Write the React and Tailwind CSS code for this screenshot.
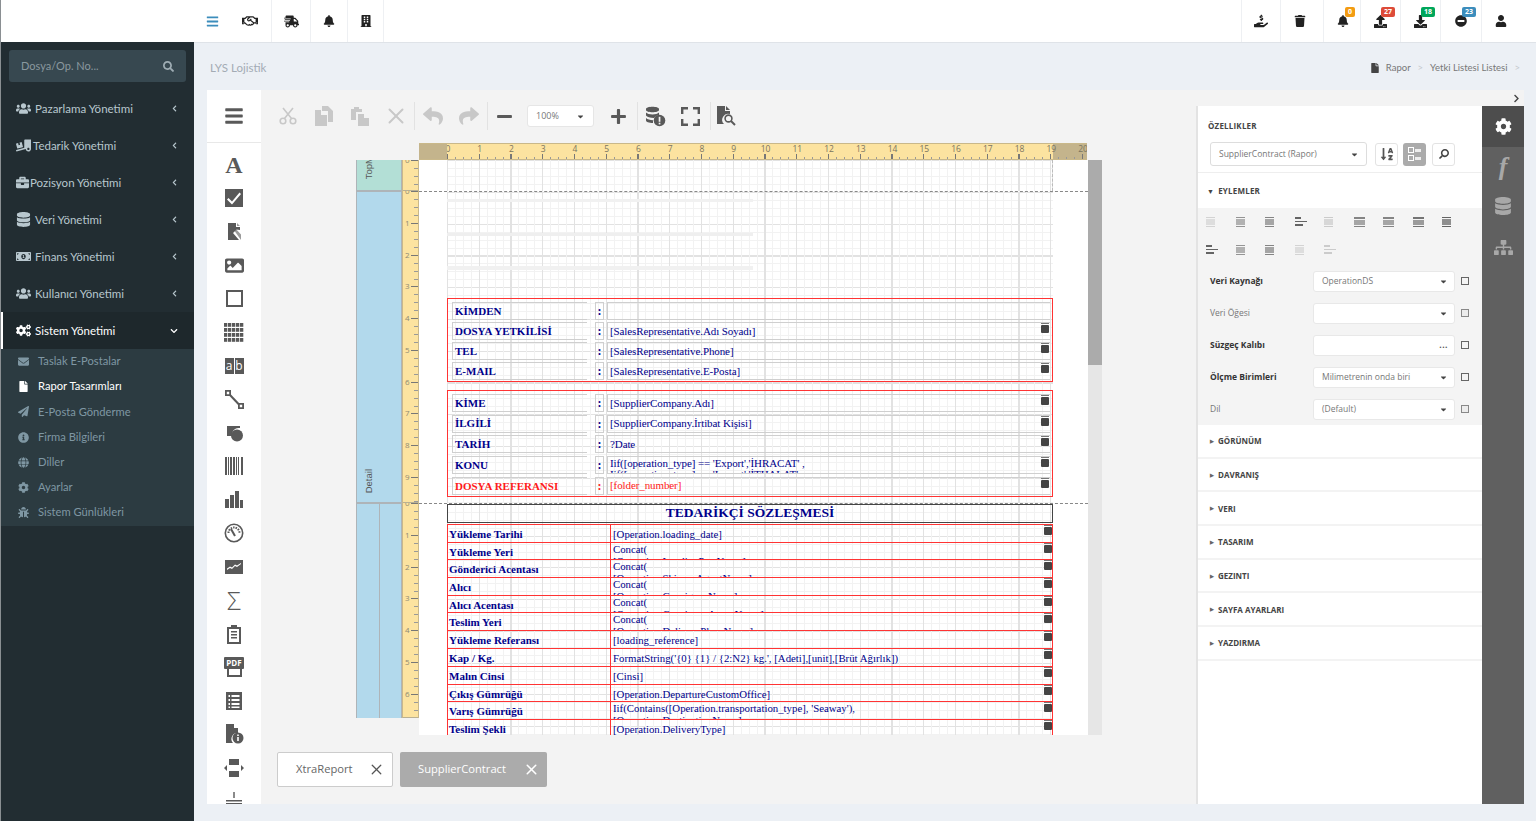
import { X } from 'lucide-react';
import {
  FaBars, FaRegHandshake, FaShippingFast, FaBell, FaBuilding, FaHandHoldingUsd, FaTrash, FaUpload, FaDownload,
  FaMinusCircle, FaUser, FaSearch, FaUsers, FaTruckLoading, FaBriefcase, FaDatabase, FaMoneyBillAlt, FaCogs,
  FaEnvelope, FaFile, FaPaperPlane, FaInfoCircle, FaGlobe, FaCog, FaBug, FaChevronLeft, FaChevronDown, FaChevronRight,
  FaReply, FaShare, FaMinus, FaPlus, FaImage, FaCaretDown, FaSitemap, FaSortAlphaDown,
} from 'react-icons/fa';

const SANS = "font-['Open_Sans','Noto_Sans',sans-serif]";
const LATO = "font-['Lato','Noto_Sans',sans-serif]";
const SERIF = "font-['Liberation_Serif',serif]";

const menu = [
  { label: 'Pazarlama Yönetimi', Icon: FaUsers, size: 15, gap: 'gap-[4px]' },
  { label: 'Tedarik Yönetimi', Icon: FaTruckLoading, size: 15, gap: 'gap-[2px]' },
  { label: 'Pozisyon Yönetimi', Icon: FaBriefcase, size: 13, gap: 'gap-[1px]' },
  { label: 'Veri Yönetimi', Icon: FaDatabase, size: 15, gap: 'gap-[4px]' },
  { label: 'Finans Yönetimi', Icon: FaMoneyBillAlt, size: 15, gap: 'gap-[4px]' },
  { label: 'Kullanıcı Yönetimi', Icon: FaUsers, size: 15, gap: 'gap-[4px]' },
];

const subMenu = [
  { label: 'Taslak E-Postalar', Icon: FaEnvelope },
  { label: 'Rapor Tasarımları', Icon: FaFile, active: true },
  { label: 'E-Posta Gönderme', Icon: FaPaperPlane },
  { label: 'Firma Bilgileri', Icon: FaInfoCircle },
  { label: 'Diller', Icon: FaGlobe },
  { label: 'Ayarlar', Icon: FaCog },
  { label: 'Sistem Günlükleri', Icon: FaBug },
];

function HeaderCell({ width, Icon, size = 13, color = 'text-[#222]', badge, badgeColor, last }) {
  return (
    <div className={`relative flex h-full items-center justify-center ${last ? '' : 'border-r border-[#eef0f3]'} ${width}`}>
      <Icon size={size} className={color} />
      {badge && (
        <span className={`absolute top-[7px] right-[5px] rounded-[2px] px-[3px] text-[7px] leading-[10px] font-bold text-white ${badgeColor}`}>
          {badge}
        </span>
      )}
    </div>
  );
}

function TopBar() {
  return (
    <header className="flex h-[43px] shrink-0 items-stretch justify-between border-b border-[#dfe3e8] bg-white">
      <div className="flex h-[42px]">
        <HeaderCell width="w-[36px]" Icon={FaBars} size={13} color="text-[#3c8dbc]" last />
        <HeaderCell width="w-[42px] pr-[2px]" Icon={FaRegHandshake} size={16} />
        <HeaderCell width="w-[39px]" Icon={FaShippingFast} size={15} />
        <HeaderCell width="w-[37px]" Icon={FaBell} size={12} />
        <HeaderCell width="w-[36px]" Icon={FaBuilding} size={12} />
      </div>
      <div className="flex h-[42px]">
        <div className="w-px bg-[#eef0f3]" />
        <HeaderCell width="w-[39px]" Icon={FaHandHoldingUsd} size={14} />
        <HeaderCell width="w-[43px] pr-[4px]" Icon={FaTrash} size={12} />
        <HeaderCell width="w-[37px] pl-[1px]" Icon={FaBell} size={12} badge="0" badgeColor="bg-[#f39c12]" />
        <HeaderCell width="w-[40px]" Icon={FaUpload} size={13} badge="27" badgeColor="bg-[#dd4b39]" />
        <HeaderCell width="w-[40px]" Icon={FaDownload} size={13} badge="18" badgeColor="bg-[#00a65a]" />
        <HeaderCell width="w-[41px]" Icon={FaMinusCircle} size={12} badge="23" badgeColor="bg-[#3c8dbc]" />
        <HeaderCell width="w-[54px] pr-[16px]" Icon={FaUser} size={12} last />
      </div>
    </header>
  );
}

function Sidebar() {
  return (
    <aside className={`flex w-[194px] shrink-0 flex-col border-l border-[#8a8f92] ${LATO}`}>
      <div className="h-[42px] shrink-0 bg-white" />
      <div className="flex flex-1 flex-col bg-[#222d32]">
        <div className="mx-[8px] mt-[8px] mb-[8px] flex h-[32px] items-center justify-between rounded-[3px] bg-[#374850] pr-[12px] pl-[12px]">
          <span className="text-[11px] text-[#8a989f]">Dosya/Op. No...</span>
          <FaSearch size={11} className="text-[#9fadb4]" />
        </div>
        {menu.map(({ label, Icon, size, gap }) => (
          <div key={label} className="flex h-[37px] items-center justify-between pr-[16px] pl-[15px] text-[#b8c7ce]">
            <div className={`flex items-center ${gap}`}>
              <Icon size={size} />
              <span className="text-[11.500px]">{label}</span>
            </div>
            <FaChevronLeft size={7} />
          </div>
        ))}
        <div className="flex h-[37px] items-center justify-between border-l-[2px] border-white bg-[#1e282c] pr-[16px] pl-[13px] text-white">
          <div className="flex items-center gap-[4px]">
            <FaCogs size={15} />
            <span className="text-[11.500px]">Sistem Yönetimi</span>
          </div>
          <FaChevronDown size={8} />
        </div>
        <div className="flex h-[177px] flex-col bg-[#2c3b41]">
          {subMenu.map(({ label, Icon, active }) => (
            <div key={label} className={`flex h-[25.2px] items-center gap-[9px] pl-[17px] ${active ? 'text-white' : 'text-[#7f97a3]'}`}>
              <span className="flex w-[11px] justify-center"><Icon size={11} /></span>
              <span className="text-[11.200px]">{label}</span>
            </div>
          ))}
        </div>
      </div>
    </aside>
  );
}

/* toolbox drawings, DevExpress glyphs have no package equivalent */
function Glyph({ children, size = 20, vb = '0 0 20 20' }) {
  return <svg width={size} height={size} viewBox={vb} fill="#595959">{children}</svg>;
}

const toolbox = [
  <span key="a" className={`${SERIF} text-[24px] leading-none font-bold text-[#595959]`}>A</span>,
  <Glyph key="c" size={18} vb="0 0 18 18"><path fillRule="evenodd" d="M0 0h18v18H0zm3.500 9L2 10.500 7 15.500 16 5 14.500 3.500 7 12.500z" /></Glyph>,
  <Glyph key="f"><path d="M4 1h8v4h4v3l-3.500-.5L9 11l6 7H4z" /><path d="M13 1l3 3h-3zM9.500 7.500l1.500-1.500 6 6.500v5.500z" fillOpacity=".6" /></Glyph>,
  <FaImage key="i" size={19} className="text-[#595959]" />,
  <div key="r" className="h-[17px] w-[17px] border-2 border-[#595959]" />,
  <Glyph key="t">
    {[1, 6, 11, 16].flatMap((y) => [0, 4, 8, 12, 16].map((x) => <rect key={`${x}-${y}`} x={x} y={y} width="3.300" height="3.800" />))}
  </Glyph>,
  <div key="ab" className="flex h-[16px] w-[19px] gap-px text-[12px] leading-[16px] text-white">
    <span className="flex-1 bg-[#595959] text-center">a</span>
    <span className="flex-1 bg-[#595959] text-center">b</span>
  </div>,
  <Glyph key="l"><path d="M1 1h6v6H1zm1.800 1.800v2.400h2.400V2.800zM14 14h6v6h-6zm1.800 1.800v2.400h2.400v-2.400z" fillRule="evenodd" /><path d="M6.500 5l9 9.500-1.500 1.500-9-9.500z" /></Glyph>,
  <Glyph key="s"><path d="M3 3h13v2a7 7 0 0 0-8 5 7 7 0 0 0 .2 3H3z" /><circle cx="13" cy="12.500" r="6" /></Glyph>,
  <Glyph key="b">
    {[[1, 2], [4, 1], [6, 2], [9, 2], [12, 1], [14, 1], [17, 2]].map(([x, w]) => <rect key={x} x={x} y="1" width={w} height="18" />)}
  </Glyph>,
  <Glyph key="ch"><rect x="1" y="9" width="4" height="9" /><rect x="6" y="5" width="4" height="13" /><rect x="11" y="1" width="4" height="17" /><rect x="16" y="10" width="3" height="8" /></Glyph>,
  <svg key="g" width="20" height="20" viewBox="0 0 20 20" fill="none" stroke="#595959"><circle cx="10" cy="10" r="8.700" strokeWidth="1.600" /><path d="M4.500 10a5.500 5.500 0 0 1 11 0" strokeWidth="2" strokeDasharray="1.500 1" /><path d="M7 6l4 7" strokeWidth="2" /></svg>,
  <Glyph key="sp"><path fillRule="evenodd" d="M1 3h18v14H1zm2 10l3-2 2 1 3-3 2 1 4-3v-1l-4 2.500-2-1-3 3-2-1-3 2z" /></Glyph>,
  <span key="sg" className="text-[25px] leading-none font-light text-[#595959]">Σ</span>,
  <Glyph key="cl"><path fillRule="evenodd" d="M3 3h4V1h6v2h4v17H3zm2 2v13h10V5zm2 2h6v1.500H7zm0 3h6v1.500H7zm0 3h6v1.500H7z" /></Glyph>,
  <div key="p" className="flex h-[21px] w-[20px] flex-col items-center">
    <span className="flex h-[12px] w-full items-center justify-center rounded-[1px] bg-[#595959] text-[8px] font-bold text-white">PDF</span>
    <span className="h-[8px] w-[15px] border-x-2 border-b-2 border-[#595959]" />
  </div>,
  <Glyph key="li"><path fillRule="evenodd" d="M2 1h16v18H2zm2.500 3v2H6V4zm3 0v2h8V4zm-3 4v2H6V8zm3 0v2h8V8zm-3 4v2H6v-2zm3 0v2h8v-2zm-3 3.500V17H6v-1.500zm3 0V17h8v-1.500z" /></Glyph>,
  <Glyph key="fi"><path d="M2 0h8v4h4v5a6 6 0 0 0-5 10H2z" /><circle cx="14" cy="14" r="5.500" /><rect x="13.200" y="13" width="1.600" height="4" fill="#fff" /><rect x="13.200" y="10.500" width="1.600" height="1.500" fill="#fff" /></Glyph>,
  <Glyph key="pb"><path d="M5 1h10v6H5zM5 13h10v6H5zM0 10l3-3v6zM20 10l-3-3v6z" /></Glyph>,
  <Glyph key="bt"><rect x="9.300" y="1" width="1.400" height="6" /><rect x="2" y="9" width="16" height="1.500" /><rect x="2" y="12" width="16" height="1.500" /></Glyph>,
];

function Toolbox() {
  return (
    <div className="flex w-[54px] shrink-0 flex-col overflow-hidden bg-white">
      <div className="flex h-[53px] shrink-0 items-center justify-center border-b border-[#e8e8e8]">
        <FaBars size={20} className="text-[#595959]" />
      </div>
      <div className="pt-[5px]">
        {toolbox.map((item, i) => (
          <div key={i} className="flex h-[33.5px] items-center justify-center">{item}</div>
        ))}
      </div>
    </div>
  );
}

function Sep() {
  return <div className="h-[28px] w-px shrink-0 bg-[#e2e2e2]" />;
}

function ToolBtn({ width = 'w-[36px]', children }) {
  return <div className={`flex shrink-0 items-center justify-center ${width}`}>{children}</div>;
}

function Toolbar() {
  const off = 'text-[#c8c8c8]';
  const on = 'text-[#595959]';
  return (
    <div className="flex h-[53px] items-center pb-[1px] pl-[9px]">
      <ToolBtn>
        <svg width="18" height="18" viewBox="0 0 18 18" fill="none" stroke="#c8c8c8" strokeWidth="1.600"><circle cx="4" cy="14" r="2.800" /><circle cx="14" cy="14" r="2.800" /><path d="M5.500 11.500L14 1M12.500 11.500L4 1" /></svg>
      </ToolBtn>
      <ToolBtn>
        <svg width="20" height="21" viewBox="0 0 20 21" fill="#c8c8c8"><path d="M8 0h6l5 5v11h-5V5H8z" /><path d="M1 4h6v5h6v11H1z" /></svg>
      </ToolBtn>
      <ToolBtn>
        <svg width="20" height="20" viewBox="0 0 20 20" fill="#c8c8c8"><path d="M1 3h3V1h5v2h3v3H6v8H1z" /><path d="M8 8h6v4h5v8H8z" /></svg>
      </ToolBtn>
      <ToolBtn><X size={26} strokeWidth={1.800} className={off} /></ToolBtn>
      <Sep />
      <ToolBtn><FaReply size={20} className={off} /></ToolBtn>
      <ToolBtn><FaShare size={20} className={off} /></ToolBtn>
      <Sep />
      <ToolBtn width="w-[33px]"><FaMinus size={17} className={on} /></ToolBtn>
      <div className={`ml-[6px] flex h-[22px] w-[67px] shrink-0 items-center justify-between rounded-[3px] border border-[#e6e6e6] bg-white pr-[8px] pl-[8px] text-[9px] text-[#777] ${SANS}`}>
        100%
        <FaCaretDown size={9} className="text-[#444]" />
      </div>
      <ToolBtn width="w-[43px] pl-[5px]"><FaPlus size={17} className={on} /></ToolBtn>
      <Sep />
      <ToolBtn width="w-[34px]">
        <svg width="21" height="21" viewBox="0 0 21 21" fill="#595959"><path d="M1 3c0-3 13-3 13 0v1c0 3-13 3-13 0zM1 6.500c2 2.500 11 2.500 13 0V9a7 7 0 0 0-5 3c-4 0-7-1-8-2.500zM1 12c1.500 1.500 4 2 7 2.200V17c-4 0-7-1-7-2.500z" /><circle cx="14.500" cy="14.500" r="5.800" /><rect x="13.700" y="10.800" width="1.700" height="5" fill="#f3f3f3" /><rect x="13.700" y="16.700" width="1.700" height="1.700" fill="#f3f3f3" /></svg>
      </ToolBtn>
      <ToolBtn width="w-[38px] pr-[1px]">
        <svg width="19" height="19" viewBox="0 0 19 19" fill="none" stroke="#595959" strokeWidth="2.400"><path d="M1.200 7V1.200H7M12 1.200h5.800V7M17.800 12v5.800H12M7 17.800H1.200V12" /></svg>
      </ToolBtn>
      <Sep />
      <ToolBtn width="w-[32px] pr-[3px]">
        <svg width="20" height="20" viewBox="0 0 20 20"><path d="M1 0h8v5h5v3a6 6 0 0 0-6 10H1z" fill="#595959" /><path d="M10 0l4 4h-4z" fill="#595959" /><circle cx="12.500" cy="12.500" r="3.400" fill="none" stroke="#595959" strokeWidth="1.600" /><path d="M15 15l4 4" stroke="#595959" strokeWidth="2" /></svg>
      </ToolBtn>
    </div>
  );
}

function Bin() {
  return (
    <svg width="8" height="10" viewBox="0 0 8 10" className="shrink-0" fill="#444">
      <rect x="0" y="0" width="8" height="1" fill="#777" />
      <rect x="0" y="2" width="8" height="8" rx="1" />
    </svg>
  );
}

function FormRow({ label, value, red }) {
  const color = red ? 'text-[#ff1a1a]' : 'text-[#00008b]';
  return (
    <div className={`flex h-[18px] items-stretch ${SERIF}`}>
      <div className={`flex w-[135px] items-center border-y border-l border-[#cfcfcf] pl-[2px] text-[11px] font-bold ${color}`}>{label}</div>
      <div className={`ml-[8px] flex w-[9px] items-center justify-center border border-[#cfcfcf] text-[12px] font-bold ${color}`}>:</div>
      <div className={`ml-[3px] flex w-[443px] items-start justify-between overflow-hidden border-y border-l border-[#cfcfcf] pr-[1px] pl-[2px] text-[11px] tracking-[-0.1px] ${color}`}>
        <span className={`${value.includes('\n') ? 'pt-[1px] leading-[11px]' : 'self-center leading-none'} whitespace-pre`}>{value}</span>
        {value !== '' && <Bin />}
      </div>
    </div>
  );
}

const tableRows = [
  { h: 'h-[18px]', label: 'Yükleme Tarihi', value: '[Operation.loading_date]' },
  { h: 'h-[17px]', label: 'Yükleme Yeri', value: 'Concat(\n[Operation.LoadingPortName]', clip: true },
  { h: 'h-[18px]', label: 'Gönderici Acentası', value: 'Concat(\n[Operation.ShipperAgentName]', clip: true },
  { h: 'h-[18px]', label: 'Alıcı', value: 'Concat(\n[Operation.ConsigneeName]', clip: true },
  { h: 'h-[17px]', label: 'Alıcı Acentası', value: 'Concat(\n[Operation.ConsigneeAgentName]', clip: true },
  { h: 'h-[18px]', label: 'Teslim Yeri', value: 'Concat(\n[Operation.DeliveryPlaceName]', clip: true },
  { h: 'h-[18px]', label: 'Yükleme Referansı', value: '[loading_reference]' },
  { h: 'h-[18px]', label: 'Kap / Kg.', value: "FormatString('{0} {1} / {2:N2} kg.', [Adeti],[unit],[Brüt Ağırlık])" },
  { h: 'h-[18px]', label: 'Malın Cinsi', value: '[Cinsi]' },
  { h: 'h-[17px]', label: 'Çıkış Gümrüğü', value: '[Operation.DepartureCustomOffice]' },
  { h: 'h-[18px]', label: 'Varış Gümrüğü', value: "Iif(Contains([Operation.transportation_type], 'Seaway'),\n[Operation.DestinationName]", clip: true },
  { h: 'h-[18px]', label: 'Teslim Şekli', value: '[Operation.DeliveryType]' },
];

function ReportTable() {
  return (
    <div className={`mt-[1px] border-t border-[#ff3333] ${SERIF}`}>
      {tableRows.map(({ h, label, value, clip }) => (
        <div key={label} className={`flex border-b border-[#ff3333] ${h}`}>
          <div className="flex w-[164px] shrink-0 items-center border-x border-[#ff3333] pt-[2px] pl-[1px] text-[11px] font-bold text-[#00008b]">{label}</div>
          <div className="flex flex-1 items-start justify-between overflow-hidden border-r border-[#ff3333] pl-[2px] text-[10.800px] text-[#00008b]">
            <span className={`leading-[12px] whitespace-pre ${clip ? '' : 'pt-[3px]'}`}>{value}</span>
            <Bin />
          </div>
        </div>
      ))}
    </div>
  );
}

const sectionOne = [
  { label: 'KİMDEN', value: '' },
  { label: 'DOSYA YETKİLİSİ', value: '[SalesRepresentative.Adı Soyadı]' },
  { label: 'TEL', value: '[SalesRepresentative.Phone]' },
  { label: 'E-MAIL', value: '[SalesRepresentative.E-Posta]' },
];

const sectionTwo = [
  { label: 'KİME', value: '[SupplierCompany.Adı]' },
  { label: 'İLGİLİ', value: '[SupplierCompany.İrtibat Kişisi]' },
  { label: 'TARİH', value: '?Date' },
  { label: 'KONU', value: "Iif([operation_type] == 'Export','İHRACAT' ,\nIif([operation_type] == 'Import','İTHALAT'" },
  { label: 'DOSYA REFERANSI', value: '[folder_number]', red: true },
];

const paperGrid = "[background-image:repeating-linear-gradient(90deg,#e2e2e2_0,#e2e2e2_1px,transparent_1px,transparent_31.75px),repeating-linear-gradient(90deg,#f2f2f2_0,#f2f2f2_1px,transparent_1px,transparent_7.9375px),repeating-linear-gradient(180deg,#e2e2e2_0,#e2e2e2_1px,transparent_1px,transparent_31.75px),repeating-linear-gradient(180deg,#f2f2f2_0,#f2f2f2_1px,transparent_1px,transparent_7.9375px)]";

function VRuler({ height, count }) {
  return (
    <div className={`flex flex-col overflow-hidden border-b border-[#b9b093] ${height}`}>
      {Array.from({ length: count }, (_, i) => (
        <div key={i} className="flex h-[31.75px] shrink-0 items-start justify-between">
          <span className={`w-[9px] -translate-y-1/2 pl-[2px] text-[8px] leading-[10px] text-[#8f8a73] ${SANS}`}>{i}</span>
          <div className="h-full w-[8px] [background:repeating-linear-gradient(180deg,#777_0,#777_1px,transparent_1px,transparent_31.75px)_right_top/8px_100%_no-repeat,repeating-linear-gradient(180deg,#999_0,#999_1px,transparent_1px,transparent_7.9375px)_right_top/4px_100%_no-repeat]" />
        </div>
      ))}
    </div>
  );
}

function Surface() {
  return (
    <div className="mx-[95px] flex h-[592px] w-[746px] shrink-0 flex-col overflow-hidden">
      {/* top ruler */}
      <div className="flex h-[17px] shrink-0 pl-[63px]">
        <div className="flex w-[668px] border-y border-[#c9b88a] bg-[#fce3a0]">
          <div className="w-[28px] shrink-0 bg-[#c4b48c]" />
          <div className="relative flex flex-1 flex-col overflow-hidden">
            <div className="absolute top-0 right-0 bottom-0 w-[34px] bg-[#c4b48c]" />
            <div className={`relative flex h-[10px] text-[8.500px] leading-[10px] text-[#7a745f] ${SANS}`}>
              {Array.from({ length: 21 }, (_, i) => (
                <span key={i} className="w-[31.75px] shrink-0"><span className="inline-block -translate-x-1/2 pl-[2px]">{i}</span></span>
              ))}
            </div>
            <div className="relative h-[5px] [background:repeating-linear-gradient(90deg,#777_0,#777_1px,transparent_1px,transparent_31.75px)_left_bottom/100%_5px_no-repeat,repeating-linear-gradient(90deg,#999_0,#999_1px,transparent_1px,transparent_7.9375px)_left_bottom/100%_2px_no-repeat]" />
          </div>
        </div>
      </div>
      <div className="flex min-h-0 flex-1">
        {/* band labels */}
        <div className="flex h-[558px] w-[46px] shrink-0 flex-col border-x border-[#aeb4b8] font-['Liberation_Sans',sans-serif] text-[9.500px] text-[#555]">
          <div className="flex h-[32px] shrink-0 overflow-hidden border-b-2 border-[#aeb4b8] bg-[#b3dfd6] pl-[5px]">
            <span className="-mt-[4px] self-start [writing-mode:vertical-rl] rotate-180">TopM</span>
          </div>
          <div className="flex h-[312px] shrink-0 items-end border-b-2 border-[#aeb4b8] bg-[#b2d9ec] pb-[9px] pl-[5px]">
            <span className="[writing-mode:vertical-rl] rotate-180">Detail</span>
          </div>
          <div className="flex flex-1 bg-[#b2d9ec]">
            <div className="w-[23px] border-r border-[#aeb4b8]" />
          </div>
        </div>
        {/* side ruler */}
        <div className="flex h-[558px] w-[17px] shrink-0 flex-col border-x border-[#c9b88a] bg-[#fce3a0]">
          <VRuler height="h-[31px]" count={1} />
          <VRuler height="h-[312px]" count={10} />
          <VRuler height="h-[215px]" count={7} />
        </div>
        {/* report page */}
        <div className="flex h-[575px] w-[669px] shrink-0 flex-col bg-white">
          <div className="flex h-[32px] shrink-0 border-b border-dashed border-[#888] pl-[28px]">
            <div className={`h-full w-[606px] border-r border-dashed border-[#bbb] ${paperGrid}`} />
          </div>
          <div className="flex h-[312px] shrink-0 border-b border-dashed border-[#888] pl-[28px]">
            <div className={`w-[606px] ${paperGrid}`}>
              <div className="h-[106px] pt-[7px]">
                <div className="h-[3px] w-[306px] bg-[#f1f1f1]" />
                <div className="mt-[31px] h-[3px] w-[306px] bg-[#efefef]" />
                <div className="mt-[30px] h-[4px] w-[306px] bg-[#f1f1f1]" />
              </div>
              <div className="flex h-[84px] flex-col gap-[2px] border border-[#ff3333] pt-[3px] pl-[4px]">
                {sectionOne.map((r) => <FormRow key={r.label} {...r} />)}
              </div>
              <div className="mt-[8px] flex h-[107px] flex-col gap-[2.700px] border border-[#ff3333] pt-[3px] pl-[4px]">
                {sectionTwo.map((r) => <FormRow key={r.label} {...r} />)}
              </div>
            </div>
          </div>
          <div className="min-h-0 flex-1 overflow-hidden pl-[28px]">
            <div className={`h-full w-[606px] ${paperGrid}`}>
              <div className={`flex h-[19px] items-center justify-center border border-[#444] text-[13.500px] font-bold text-[#00008b] ${SERIF}`}>
                TEDARİKÇİ SÖZLEŞMESİ
              </div>
              <ReportTable />
            </div>
          </div>
        </div>
        {/* scrollbar */}
        <div className="h-[575px] w-[14px] shrink-0 bg-[#e6e6e6]">
          <div className="h-[205px] bg-[#ababab]" />
        </div>
      </div>
    </div>
  );
}

function DocTabs() {
  return (
    <div className={`mt-[17px] flex gap-[7px] pl-[16px] ${SANS} text-[11.200px]`}>
      <div className="flex h-[35px] w-[116px] items-center justify-between rounded-[2px] border border-[#cccccc] bg-white pr-[7px] pl-[18px] text-[#666]">
        XtraReport
        <X size={17} strokeWidth={1.800} className="text-[#555]" />
      </div>
      <div className="flex h-[35px] w-[147px] items-center justify-between rounded-[2px] bg-[#ababab] pr-[7px] pl-[18px] text-white">
        SupplierContract
        <X size={17} strokeWidth={2.200} />
      </div>
    </div>
  );
}

function ActionIcon({ kind, dim }) {
  return (
    <span className={`flex h-[10px] w-[29.500px] justify-start ${dim}`}>
      {kind === 'h' ? (
        <svg width="12" height="10" viewBox="0 0 12 10" fill="#555"><rect width="6" height="2" /><rect y="4" width="12" height="1" /><rect y="7" width="8" height="2" /></svg>
      ) : kind === 'b' ? (
        <svg width="11" height="10" viewBox="0 0 11 10" fill="#555"><rect width="11" height="2" y="0" /><rect width="11" height="5" y="3" fillOpacity=".7" /><rect width="11" height="1" y="9" /></svg>
      ) : (
        <svg width="9" height="10" viewBox="0 0 9 10" fill="#555"><rect width="9" height="1" /><rect y="2" width="9" height="6" fillOpacity=".7" /><rect y="9" width="9" height="1" /></svg>
      )}
    </span>
  );
}

const propRows = [
  { label: 'Veri Kaynağı', value: 'OperationDS', strong: true },
  { label: 'Veri Öğesi', value: '' },
  { label: 'Süzgeç Kalıbı', value: '', strong: true, dots: true },
  { label: 'Ölçme Birimleri', value: 'Milimetrenin onda biri', strong: true },
  { label: 'Dil', value: '(Default)' },
];

const groups = ['GÖRÜNÜM', 'DAVRANIŞ', 'VERI', 'TASARIM', 'GEZINTI', 'SAYFA AYARLARI', 'YAZDIRMA'];

function Properties() {
  return (
    <div className={`flex w-[328px] shrink-0 flex-col ${SANS}`}>
      <div className="flex h-[16px] shrink-0 items-center justify-end bg-[#f3f3f3] pr-[3px]">
        <FaChevronRight size={9} className="text-[#444]" />
      </div>
      <div className="flex min-h-0 flex-1">
        <div className="flex w-[286px] flex-col border-l-2 border-[#e3e3e3] bg-white">
          <div className="flex h-[67px] shrink-0 flex-col border-b border-[#eeeeee] pt-[16px]">
            <span className="pl-[10px] text-[8px] leading-[8px] font-bold tracking-[0.2px] text-[#444]">ÖZELLIKLER</span>
            <div className="mt-[12px] flex items-center pl-[12px]">
              <div className="flex h-[24px] w-[157px] items-center justify-between rounded-[3px] border border-[#dddddd] pr-[7px] pl-[8px] text-[8.500px] text-[#777]">
                SupplierContract (Rapor)
                <FaCaretDown size={9} className="text-[#444]" />
              </div>
              <div className="ml-[8px] flex h-[23px] w-[23px] items-center justify-center rounded-[3px] border border-[#e3e3e3]">
                <FaSortAlphaDown size={14} className="text-[#555]" />
              </div>
              <div className="ml-[5px] flex h-[23px] w-[23px] flex-col items-center justify-center gap-[2px] rounded-[3px] bg-[#ababab]">
                <span className="flex items-center gap-[1px]"><span className="h-[6px] w-[6px] border border-white" /><span className="h-[3px] w-[6px] bg-white/80" /></span>
                <span className="flex items-center gap-[1px]"><span className="h-[6px] w-[6px] border border-white" /><span className="h-[3px] w-[6px] bg-white/80" /></span>
              </div>
              <div className="ml-[6px] flex h-[23px] w-[23px] items-center justify-center rounded-[3px] border border-[#e3e3e3]">
                <FaSearch size={10} className="-scale-x-100 text-[#444]" />
              </div>
            </div>
          </div>
          <div className="flex h-[35px] shrink-0 items-center gap-[4px] pt-[1px] pl-[9px] text-[8px] font-bold tracking-[0.2px] text-[#444]">
            <span className="text-[7px] leading-none">▼</span> EYLEMLER
          </div>
          <div className="flex h-[217px] shrink-0 flex-col bg-[#f4f4f4]">
            <div className="flex h-[28px] shrink-0 items-center pl-[8px]">
              <ActionIcon dim="opacity-20" />
              <ActionIcon dim="opacity-60" />
              <ActionIcon dim="opacity-70" />
              <ActionIcon kind="h" dim="opacity-90" />
              <ActionIcon dim="opacity-25" />
              <ActionIcon kind="b" dim="opacity-70" />
              <ActionIcon kind="b" dim="opacity-70" />
              <ActionIcon kind="b" dim="opacity-80" />
              <ActionIcon dim="opacity-90" />
            </div>
            <div className="flex h-[28px] shrink-0 items-center pl-[8px]">
              <ActionIcon kind="h" dim="opacity-90" />
              <ActionIcon dim="opacity-60" />
              <ActionIcon dim="opacity-70" />
              <ActionIcon dim="opacity-20" />
              <ActionIcon kind="h" dim="opacity-25" />
            </div>
            <div className="mt-[1px] flex flex-col">
              {propRows.map(({ label, value, strong, dots }) => (
                <div key={label} className="flex h-[32px] shrink-0 items-center pl-[12px]">
                  <span className={`w-[103px] text-[8.500px] ${strong ? 'font-bold text-[#333]' : 'text-[#777]'}`}>{label}</span>
                  <div className="flex h-[21px] w-[142px] items-center justify-between rounded-[3px] border border-[#e8e8e8] bg-white pr-[6px] pl-[8px] text-[8.500px] text-[#777]">
                    <span>{value}</span>
                    {dots ? <span className="font-bold tracking-[0.5px] text-[#555]">...</span> : <FaCaretDown size={9} className="text-[#444]" />}
                  </div>
                  <span className={`ml-[6px] h-[8px] w-[8px] border ${strong ? 'border-[#666]' : 'border-[#888] bg-[#ececec]'}`} />
                </div>
              ))}
            </div>
          </div>
          {groups.map((g) => (
            <div key={g} className="flex h-[33.700px] shrink-0 items-center gap-[4px] border-b-2 border-[#f3f3f3] pt-[1px] pl-[12px] text-[8px] font-bold text-[#444]">
              <span className="text-[5px] leading-none text-[#666]">▶</span> {g}
            </div>
          ))}
        </div>
        <div className="flex w-[42px] flex-col items-center bg-[#606060] text-[#a8a8a8]">
          <div className="flex h-[41px] w-full items-center justify-center bg-[#4d4d4d]"><FaCog size={17} className="text-white" /></div>
          <div className="flex h-[39px] items-center justify-center">
            <span className={`${SERIF} text-[26px] leading-none font-bold italic`}>f</span>
          </div>
          <div className="flex h-[40px] items-center justify-center"><FaDatabase size={18} /></div>
          <div className="flex h-[42px] items-center justify-center"><FaSitemap size={19} /></div>
        </div>
      </div>
    </div>
  );
}

export default function App() {
  return (
    <div className={`flex h-[821px] w-[1536px] overflow-hidden bg-[#ecf0f5] ${SANS}`}>
      <Sidebar />
      <main className="flex min-w-0 flex-1 flex-col">
        <TopBar />
        <div className={`flex h-[47px] shrink-0 items-center justify-between pt-[3px] pr-[16px] pl-[16px] text-[#a3abb4] ${LATO}`}>
          <span className="text-[11.500px]">LYS Lojistik</span>
          <div className="flex items-center text-[9.500px]">
            <FaFile size={10} className="text-[#444]" />
            <span className="ml-[6px] text-[#777]">Rapor</span>
            <span className="mx-[7px] text-[#c5c9ce]">&gt;</span>
            <span className="text-[#777]">Yetki Listesi Listesi</span>
            <span className="ml-[7px] text-[#c5c9ce]">&gt;</span>
          </div>
        </div>
        <div className="mr-[12px] ml-[13px] flex h-[714px] shrink-0">
          <Toolbox />
          <div className="flex w-[935px] shrink-0 flex-col bg-[#f3f3f3]">
            <Toolbar />
            <Surface />
            <DocTabs />
          </div>
          <Properties />
        </div>
      </main>
    </div>
  );
}
